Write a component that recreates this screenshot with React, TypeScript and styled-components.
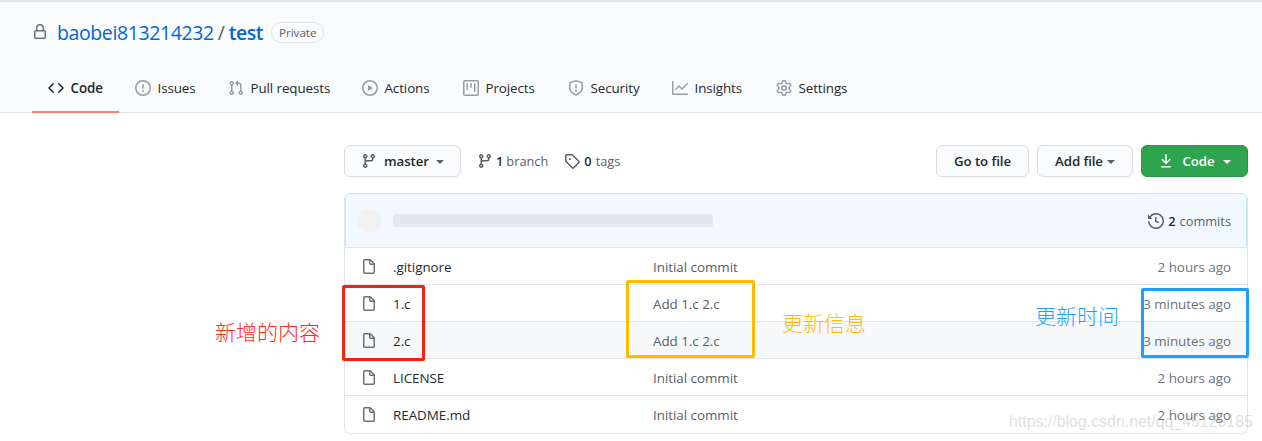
import React from "react";
import styled, { createGlobalStyle } from "styled-components";

const P = {
  lock: "M4 4v2h-.25A1.75 1.75 0 002 7.75v5.5c0 .966.784 1.75 1.75 1.75h8.5A1.75 1.75 0 0014 13.25v-5.5A1.75 1.75 0 0012.25 6H12V4a4 4 0 10-8 0zm6.5 2V4a2.5 2.5 0 00-5 0v2h5zM12 7.5h.25a.25.25 0 01.25.25v5.5a.25.25 0 01-.25.25h-8.5a.25.25 0 01-.25-.25v-5.5a.25.25 0 01.25-.25H12z",
  code: "M4.72 3.22a.75.75 0 011.06 1.06L2.06 8l3.72 3.72a.75.75 0 11-1.06 1.06L.47 8.53a.75.75 0 010-1.06l4.25-4.25zm6.56 0a.75.75 0 10-1.06 1.06L13.94 8l-3.72 3.72a.75.75 0 101.06 1.06l4.25-4.25a.75.75 0 000-1.06l-4.25-4.25z",
  issue: "M8 1.5a6.5 6.5 0 100 13 6.5 6.5 0 000-13zM0 8a8 8 0 1116 0A8 8 0 010 8zm9 3a1 1 0 11-2 0 1 1 0 012 0zm-.25-6.25a.75.75 0 00-1.5 0v3.5a.75.75 0 001.5 0v-3.5z",
  pull: "M7.177 3.073L9.573.677A.25.25 0 0110 .854v4.792a.25.25 0 01-.427.177L7.177 3.427a.25.25 0 010-.354zM3.75 2.5a.75.75 0 100 1.5.75.75 0 000-1.5zm-2.25.75a2.25 2.25 0 113 2.122v5.256a2.251 2.251 0 11-1.5 0V5.372A2.25 2.25 0 011.5 3.25zM11 2.5h-1V4h1a1 1 0 011 1v5.628a2.251 2.251 0 101.5 0V5A2.5 2.5 0 0011 2.5zm1 10.25a.75.75 0 111.5 0 .75.75 0 01-1.5 0zM3.75 12a.75.75 0 100 1.5.75.75 0 000-1.5z",
  play: "M1.5 8a6.5 6.5 0 1113 0 6.5 6.5 0 01-13 0zM8 0a8 8 0 100 16A8 8 0 008 0zM6.379 5.227A.25.25 0 006 5.442v5.117a.25.25 0 00.379.214l4.264-2.559a.25.25 0 000-.428L6.379 5.227z",
  project: "M1.75 0A1.75 1.75 0 000 1.75v12.5C0 15.216.784 16 1.75 16h12.5A1.75 1.75 0 0016 14.25V1.75A1.75 1.75 0 0014.25 0H1.75zM1.5 1.75a.25.25 0 01.25-.25h12.5a.25.25 0 01.25.25v12.5a.25.25 0 01-.25.25H1.75a.25.25 0 01-.25-.25V1.75zM11.75 3a.75.75 0 00-.75.75v7.5a.75.75 0 001.5 0v-7.5a.75.75 0 00-.75-.75zm-8.25.75a.75.75 0 011.5 0v5.5a.75.75 0 01-1.5 0v-5.5zM8 3a.75.75 0 00-.75.75v3.5a.75.75 0 001.5 0v-3.5A.75.75 0 008 3z",
  shield: "M7.467.133a1.75 1.75 0 011.066 0l5.25 1.68A1.75 1.75 0 0115 3.48V7c0 1.566-.32 3.182-1.303 4.682-.983 1.498-2.585 2.813-5.032 3.855a1.7 1.7 0 01-1.33 0c-2.447-1.042-4.049-2.357-5.032-3.855C1.32 10.182 1 8.566 1 7V3.48a1.75 1.75 0 011.217-1.667l5.25-1.68zm.61 1.429a.25.25 0 00-.153 0l-5.25 1.68a.25.25 0 00-.174.238V7c0 1.358.275 2.666 1.057 3.86.784 1.194 2.121 2.34 4.366 3.297a.2.2 0 00.154 0c2.245-.956 3.582-2.104 4.366-3.298C13.225 9.666 13.5 8.36 13.5 7V3.48a.25.25 0 00-.174-.237l-5.25-1.68zM9 10.5a1 1 0 11-2 0 1 1 0 012 0zm-.25-5.75a.75.75 0 10-1.5 0v3a.75.75 0 001.5 0v-3z",
  graph: "M1.5 1.75a.75.75 0 00-1.5 0v12.5c0 .414.336.75.75.75h14.5a.75.75 0 000-1.5H1.5V1.75zm14.28 2.53a.75.75 0 00-1.06-1.06L10 7.94 7.53 5.47a.75.75 0 00-1.06 0L3.22 8.72a.75.75 0 001.06 1.06L7 7.06l2.47 2.47a.75.75 0 001.06 0l5.25-5.25z",
  gear: "M7.429 1.525a6.593 6.593 0 011.142 0c.036.003.108.036.137.146l.289 1.105c.147.56.55.967.997 1.189.174.086.341.183.501.29.417.278.97.423 1.53.27l1.102-.303c.11-.03.175.016.195.046.219.31.41.641.573.989.014.031.022.11-.059.19l-.815.806c-.411.406-.562.957-.53 1.456a4.588 4.588 0 010 .582c-.032.499.119 1.05.53 1.456l.815.806c.08.08.073.159.059.19a6.494 6.494 0 01-.573.99c-.02.029-.086.074-.195.045l-1.103-.303c-.559-.153-1.112-.008-1.529.27-.16.107-.327.204-.5.29-.449.222-.851.628-.998 1.189l-.289 1.105c-.029.11-.101.143-.137.146a6.613 6.613 0 01-1.142 0c-.036-.003-.108-.037-.137-.146l-.289-1.105c-.147-.56-.55-.967-.997-1.189a4.502 4.502 0 01-.501-.29c-.417-.278-.97-.423-1.53-.27l-1.102.303c-.11.03-.175-.016-.195-.046a6.492 6.492 0 01-.573-.989c-.014-.031-.022-.11.059-.19l.815-.806c.411-.406.562-.957.53-1.456a4.587 4.587 0 010-.582c.032-.499-.119-1.05-.53-1.456l-.815-.806c-.08-.08-.073-.159-.059-.19a6.44 6.44 0 01.573-.99c.02-.029.086-.075.195-.045l1.103.303c.559.153 1.112.008 1.529-.27.16-.107.327-.204.5-.29.449-.222.851-.628.998-1.189l.289-1.105c.029-.11.101-.143.137-.146zM8 0c-.236 0-.47.01-.701.03-.743.065-1.29.615-1.458 1.261l-.29 1.106c-.017.066-.078.158-.211.224a5.994 5.994 0 00-.668.386c-.123.082-.233.09-.3.071L3.27 2.776c-.644-.177-1.392.02-1.82.63a7.977 7.977 0 00-.704 1.217c-.315.675-.111 1.422.363 1.891l.815.806c.05.048.098.147.088.294a6.084 6.084 0 000 .772c.01.147-.038.246-.088.294l-.815.806c-.474.469-.678 1.216-.363 1.891.2.428.436.835.704 1.218.428.609 1.176.806 1.82.63l1.103-.303c.066-.019.176-.011.299.071.213.143.436.272.668.386.133.066.194.158.212.224l.289 1.106c.169.646.715 1.196 1.458 1.26a8.094 8.094 0 001.402 0c.743-.064 1.29-.614 1.458-1.26l.29-1.106c.017-.066.078-.158.211-.224a5.98 5.98 0 00.668-.386c.123-.082.233-.09.3-.071l1.102.302c.644.177 1.392-.02 1.82-.63.268-.382.505-.789.704-1.217.315-.675.111-1.422-.364-1.891l-.814-.806c-.05-.048-.098-.147-.088-.294a6.1 6.1 0 000-.772c-.01-.147.039-.246.088-.294l.814-.806c.475-.469.679-1.216.364-1.891a7.992 7.992 0 00-.704-1.218c-.428-.609-1.176-.806-1.82-.63l-1.103.303c-.066.019-.176.011-.299-.071a5.991 5.991 0 00-.668-.386c-.133-.066-.194-.158-.212-.224L10.16 1.29C9.99.645 9.444.095 8.701.031A8.094 8.094 0 008 0zm1.5 8a1.5 1.5 0 11-3 0 1.5 1.5 0 013 0zM11 8a3 3 0 11-6 0 3 3 0 016 0z",
  branch: "M11.75 2.5a.75.75 0 100 1.5.75.75 0 000-1.5zm-2.25.75a2.25 2.25 0 113 2.122V6A2.5 2.5 0 0110 8.5H6a1 1 0 00-1 1v1.128a2.251 2.251 0 11-1.5 0V5.372a2.25 2.25 0 111.5 0v1.836A2.492 2.492 0 016 7h4a1 1 0 001-1v-.628A2.25 2.25 0 019.5 3.25zM4.25 12a.75.75 0 100 1.5.75.75 0 000-1.5zM3.5 3.25a.75.75 0 111.5 0 .75.75 0 01-1.5 0z",
  tag: "M2.5 7.775V2.75a.25.25 0 01.25-.25h5.025a.25.25 0 01.177.073l6.25 6.25a.25.25 0 010 .354l-5.025 5.025a.25.25 0 01-.354 0l-6.25-6.25a.25.25 0 01-.073-.177zm-1.5 0V2.75C1 1.784 1.784 1 2.75 1h5.025c.464 0 .91.184 1.238.513l6.25 6.25a1.75 1.75 0 010 2.474l-5.026 5.026a1.75 1.75 0 01-2.474 0l-6.25-6.25A1.75 1.75 0 011 7.775zM6 5a1 1 0 100 2 1 1 0 000-2z",
  history: "M1.643 3.143L.427 1.927A.25.25 0 000 2.104V5.75c0 .138.112.25.25.25h3.646a.25.25 0 00.177-.427L2.715 4.215a6.5 6.5 0 11-1.18 4.458.75.75 0 10-1.493.154 8.001 8.001 0 101.6-5.684zM7.75 4a.75.75 0 01.75.75v2.992l2.028.812a.75.75 0 01-.557 1.392l-2.5-1A.75.75 0 017 8.25v-3.5A.75.75 0 017.75 4z",
  file: "M3.75 1.5a.25.25 0 00-.25.25v11.5c0 .138.112.25.25.25h8.5a.25.25 0 00.25-.25V6H9.75A1.75 1.75 0 018 4.25V1.5H3.75zm5.75.56v2.19c0 .138.112.25.25.25h2.19L9.5 2.06zM2 1.75C2 .784 2.784 0 3.75 0h5.086c.464 0 .909.184 1.237.513l3.414 3.414c.329.328.513.773.513 1.237v8.086A1.75 1.75 0 0112.25 15h-8.5A1.75 1.75 0 012 13.25V1.75z",
  download: "M7.47 10.78a.75.75 0 001.06 0l3.75-3.75a.75.75 0 00-1.06-1.06L8.75 8.44V1.75a.75.75 0 00-1.5 0v6.69L4.78 5.97a.75.75 0 00-1.06 1.06l3.75 3.75zM3.75 13a.75.75 0 000 1.5h8.5a.75.75 0 000-1.5h-8.5z",
};

const Svg = styled.svg`
  width: 16px; height: 16px; flex: none; fill: currentColor; display: block;
`;
const Icon = ({ d }: { d: string }) => (
  <Svg viewBox="0 0 16 16" aria-hidden="true"><path fillRule="evenodd" d={d} /></Svg>
);

const Global = createGlobalStyle`
  html, body { margin: 0; padding: 0; background: #fff; overflow: hidden; }
  body { font-family: "Open Sans", "Noto Sans CJK SC", sans-serif; color: #24292e; }
  #root { width: 1262px; height: 441px; position: relative; overflow: hidden; }
`;

const Header = styled.header`
  height: 113px; box-sizing: border-box; background: #fafbfc;
  border-top: 2px solid #e1e4e8; border-bottom: 1px solid #e1e4e8;
  display: flex; flex-direction: column; justify-content: space-between;
`;
const RepoTitle = styled.div`
  display: flex; align-items: center; padding: 18px 0 0 32px; height: 24px;
  font-size: 19.5px; color: #586069;
  svg { color: #6a737d; margin-right: 9px; }
`;
const Owner = styled.span` color: #0366d6; letter-spacing: -0.4px; `;
const Slash = styled.span` margin: 0 4px; `;
const Repo = styled.span` color: #0366d6; font-weight: 600; letter-spacing: -0.5px; `;
const Badge = styled.span`
  margin-left: 8px; height: 19px; padding: 0 7px; display: flex; align-items: center;
  border: 1px solid #e1e4e8; border-radius: 10px; font-size: 11.6px; font-weight: 500; color: #586069;
`;
const Tabs = styled.nav` display: flex; padding-left: 32px; `;
const Tab = styled.div<{ $active?: boolean; $w: number }>`
  width: ${p => p.$w}px; height: 48px; box-sizing: border-box; padding-left: 16px;
  display: flex; align-items: center; gap: 6.5px; font-size: 13.4px; font-weight: ${p => p.$active ? 600 : 400};
  border-bottom: 2px solid ${p => p.$active ? "#f9826c" : "transparent"};
  margin-bottom: -1px; white-space: nowrap; letter-spacing: -0.1px;
  svg { color: ${p => p.$active ? "#24292e" : "#959da5"}; }
`;

const Main = styled.main` padding: 32px 14px 0 344px; `;
const Toolbar = styled.div` display: flex; align-items: center; height: 32px; margin-bottom: 16px; `;
const Button = styled.div<{ $w: number; $primary?: boolean; $gap?: number }>`
  width: ${p => p.$w}px; height: 32px; box-sizing: border-box; flex: none;
  display: flex; align-items: center; justify-content: center; gap: ${p => p.$gap ?? 7}px;
  border-radius: 6px; font-size: 13.3px; font-weight: 600; letter-spacing: -0.1px;
  background: ${p => p.$primary ? "#2ea44f" : "#fafbfc"};
  color: ${p => p.$primary ? "#fff" : "#24292e"};
  border: 1px solid ${p => p.$primary ? "#2a964a" : "#d8dadd"};
  svg { color: ${p => p.$primary ? "#fff" : "#586069"}; }
`;
const Caret = styled.span<{ $c?: string }>`
  width: 0; height: 0; margin-top: 2px; border-style: solid; border-width: 4px 4px 0;
  border-color: ${p => p.$c ?? "#586069"} transparent transparent;
`;
const Stat = styled.div<{ $ml: number; $gap?: number }>`
  margin-left: ${p => p.$ml}px; display: flex; align-items: center; gap: ${p => p.$gap ?? 3}px; font-size: 12.8px; color: #586069;
  margin-top: -1px; white-space: nowrap;
  b { font-weight: 600; color: #24292e; }
`;
const Spacer = styled.div` flex: 1; `;
const Gap = styled.div` width: 8px; flex: none; `;

const Table = styled.section`
  height: 241px; box-sizing: border-box; border: 1px solid #e1e4e8; border-top-color: #c8e1ff; border-radius: 6px; overflow: hidden;
`;
const TableHead = styled.div`
  height: 54px; box-sizing: border-box; background: #f1f8ff; border-bottom: 1px solid #e1e4e8;
  display: flex; align-items: center; padding: 1px 16px 0 12px; box-shadow: inset 1px 0 0 #c8e1ff, inset -1px 0 0 #c8e1ff;
`;
const Avatar = styled.div` width: 24px; height: 24px; border-radius: 50%; background: #f1f1f1; flex: none; margin-top: -1px; `;
const Skeleton = styled.div` width: 320px; height: 13px; margin-left: 12px; border-radius: 3px; background: #e2e8f0; margin-top: -2px; `;
const Row = styled.div<{ $alt?: boolean }>`
  height: 37px; box-sizing: border-box; display: flex; align-items: center; padding: 1px 16px 0;
  background: ${p => p.$alt ? "#f6f8fa" : "#fff"}; font-size: 13.4px; letter-spacing: -0.03px;
  border-bottom: 1px solid #e1e4e8;
  &:last-child { border-bottom: 0; }
  svg { color: #6a737d; }
`;
const Name = styled.span` width: 260px; margin-left: 16px; color: #24292e; `;
const Msg = styled.span` flex: 1; color: #586069; `;
const Time = styled.span` color: #6a737d; white-space: nowrap; `;

const Mark = styled.div<{ $x: number; $y: number; $w: number; $h: number; $c: string }>`
  position: absolute; left: ${p => p.$x}px; top: ${p => p.$y}px; width: ${p => p.$w}px; height: ${p => p.$h}px;
  box-sizing: border-box; border: 3px solid ${p => p.$c}; border-radius: 2px; pointer-events: none;
`;
const Note = styled.div<{ $x: number; $y: number; $c: string }>`
  position: absolute; left: ${p => p.$x}px; top: ${p => p.$y}px; color: ${p => p.$c};
  font-family: "Noto Sans CJK SC", sans-serif; font-size: 21px; font-weight: 300; line-height: 26px; white-space: nowrap;
`;
const Watermark = styled.div`
  position: absolute; left: 1009px; top: 412px; font-family: "Liberation Sans", sans-serif; font-size: 15.9px; line-height: 20px;
  color: rgba(170,170,170,0.4); white-space: nowrap;
`;

const files = [
  { n: ".gitignore", m: "Initial commit", t: "2 hours ago" },
  { n: "1.c", m: "Add 1.c 2.c", t: "3 minutes ago" },
  { n: "2.c", m: "Add 1.c 2.c", t: "3 minutes ago", alt: true },
  { n: "LICENSE", m: "Initial commit", t: "2 hours ago" },
  { n: "README.md", m: "Initial commit", t: "2 hours ago" },
];

export default function App() {
  return (
    <>
      <Global />
      <Header>
        <RepoTitle>
          <Icon d={P.lock} />
          <Owner>baobei813214232</Owner><Slash>/</Slash><Repo>test</Repo>
          <Badge>Private</Badge>
        </RepoTitle>
        <Tabs>
          <Tab $active $w={87}><Icon d={P.code} />Code</Tab>
          <Tab $w={93}><Icon d={P.issue} />Issues</Tab>
          <Tab $w={134}><Icon d={P.pull} />Pull requests</Tab>
          <Tab $w={101}><Icon d={P.play} />Actions</Tab>
          <Tab $w={105}><Icon d={P.project} />Projects</Tab>
          <Tab $w={104}><Icon d={P.shield} />Security</Tab>
          <Tab $w={104}><Icon d={P.graph} />Insights</Tab>
          <Tab $w={100}><Icon d={P.gear} />Settings</Tab>
        </Tabs>
      </Header>
      <Main>
        <Toolbar>
          <Button $w={117}><Icon d={P.branch} />master<Caret /></Button>
          <Stat $ml={16}><Icon d={P.branch} /><b>1</b> branch</Stat>
          <Stat $ml={16} $gap={4}><Icon d={P.tag} /><b>0</b> tags</Stat>
          <Spacer />
          <Button $w={93}>Go to file</Button>
          <Gap />
          <Button $w={96} $gap={4}>Add file<Caret /></Button>
          <Gap />
          <Button $w={107} $primary $gap={8}><Icon d={P.download} />Code<Caret $c="#fff" /></Button>
        </Toolbar>
        <Table>
          <TableHead>
            <Avatar />
            <Skeleton />
            <Spacer />
            <Stat $ml={0} $gap={4}><Icon d={P.history} /><b>2</b> commits</Stat>
          </TableHead>
          {files.map(f => (
            <Row key={f.n} $alt={f.alt}>
              <Icon d={P.file} />
              <Name>{f.n}</Name>
              <Msg>{f.m}</Msg>
              <Time>{f.t}</Time>
            </Row>
          ))}
        </Table>
      </Main>
      <Mark $x={342} $y={285} $w={83} $h={76} $c="#ff1f12" />
      <Mark $x={626} $y={280} $w={129} $h={78} $c="#ffbb00" />
      <Mark $x={1141} $y={288} $w={108} $h={70} $c="#1e9fff" />
      <Note $x={215} $y={318} $c="#ff2a1c">新增的内容</Note>
      <Note $x={782} $y={309} $c="#ffbb00">更新信息</Note>
      <Note $x={1035} $y={302} $c="#1e9fff">更新时间</Note>
      <Watermark>https://blog.csdn.net/qq_45125185</Watermark>
    </>
  );
}
